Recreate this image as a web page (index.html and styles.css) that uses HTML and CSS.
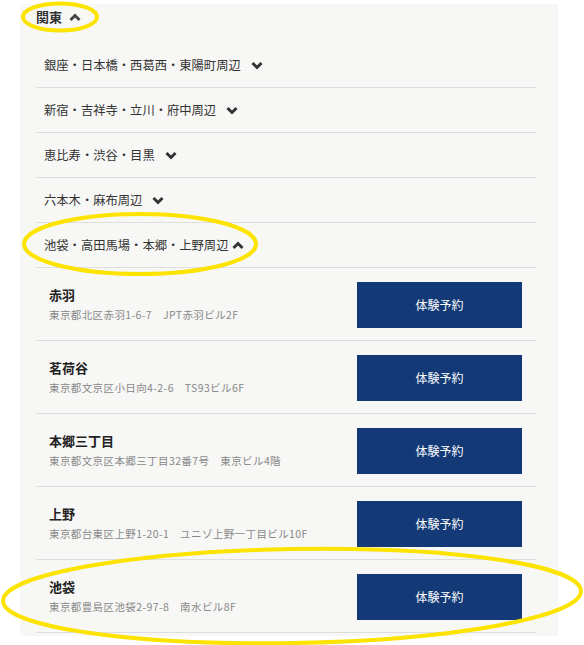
FILE: index.html
```html
<!DOCTYPE html>
<html lang="ja">
<head>
<meta charset="utf-8">
<link rel="stylesheet" href="styles.css">
</head>
<body>
<div class="panel">
  <div class="region">関東
    <svg class="chev" width="12" height="9" viewBox="0 0 12 9"><polyline points="1.5,7 6,2.5 10.5,7"/></svg>
  </div>
  <ul class="areas">
    <li class="area">銀座・日本橋・西葛西・東陽町周辺<svg class="chev" width="12" height="9" viewBox="0 0 12 9"><polyline points="1.5,2 6,6.5 10.5,2"/></svg></li>
    <li class="area">新宿・吉祥寺・立川・府中周辺<svg class="chev" width="12" height="9" viewBox="0 0 12 9"><polyline points="1.5,2 6,6.5 10.5,2"/></svg></li>
    <li class="area">恵比寿・渋谷・目黒<svg class="chev" width="12" height="9" viewBox="0 0 12 9"><polyline points="1.5,2 6,6.5 10.5,2"/></svg></li>
    <li class="area">六本木・麻布周辺<svg class="chev" width="12" height="9" viewBox="0 0 12 9"><polyline points="1.5,2 6,6.5 10.5,2"/></svg></li>
    <li class="area open">池袋・高田馬場・本郷・上野周辺<svg class="chev" width="12" height="9" viewBox="0 0 12 9"><polyline points="1.5,7 6,2.5 10.5,7"/></svg></li>
  </ul>
  <ul class="shops">
    <li class="shop"><div class="info"><div class="name">赤羽</div><div class="addr">東京都北区赤羽1-6-7　JPT赤羽ビル2F</div></div><a class="btn">体験予約</a></li>
    <li class="shop"><div class="info"><div class="name">茗荷谷</div><div class="addr">東京都文京区小日向4-2-6　TS93ビル6F</div></div><a class="btn">体験予約</a></li>
    <li class="shop"><div class="info"><div class="name">本郷三丁目</div><div class="addr">東京都文京区本郷三丁目32番7号　東京ビル4階</div></div><a class="btn">体験予約</a></li>
    <li class="shop"><div class="info"><div class="name">上野</div><div class="addr">東京都台東区上野1-20-1　ユニゾ上野一丁目ビル10F</div></div><a class="btn">体験予約</a></li>
    <li class="shop"><div class="info"><div class="name">池袋</div><div class="addr">東京都豊島区池袋2-97-8　南水ビル8F</div></div><a class="btn">体験予約</a></li>
  </ul>
</div>
<svg class="marks" width="584" height="645" viewBox="0 0 584 645">
  <ellipse cx="60" cy="17" rx="37" ry="13.5"/>
  <ellipse cx="140" cy="244" rx="116" ry="30"/>
  <ellipse cx="292" cy="596" rx="289" ry="47" transform="rotate(-1 292 596)"/>
</svg>
</body>
</html>
```
FILE: styles.css
```css
html, body {
  margin: 0;
  padding: 0;
  background: #fff;
}
body {
  font-family: "Noto Sans CJK JP", "Noto Sans", sans-serif;
  color: #333;
  position: relative;
  width: 584px;
  height: 645px;
  overflow: hidden;
}
ul {
  list-style: none;
  margin: 0;
  padding: 0;
}
.panel {
  margin: 4px 0 0 20px;
  width: 538px;
  box-sizing: border-box;
  padding: 0 22px 3px 16px;
  background: #f7f7f5;
}
.region {
  height: 26px;
  line-height: 26px;
  font-size: 13px;
  font-weight: bold;
  color: #333;
  display: flex;
  align-items: center;
  gap: 7px;
  margin-bottom: 13px;
}
.chev {
  display: block;
}
.chev polyline {
  fill: none;
  stroke: #333;
  stroke-width: 3;
  stroke-linecap: butt;
  stroke-linejoin: miter;
}
.region .chev polyline {
  stroke: #444;
}
.area {
  height: 44px;
  border-bottom: 1px solid #dedede;
  padding-left: 8px;
  display: flex;
  align-items: center;
  gap: 10px;
  font-size: 12.3px;
  color: #333;
}
.area.open {
  gap: 4px;
}
.shop {
  height: 72px;
  border-bottom: 1px solid #dedede;
  display: flex;
  align-items: center;
  justify-content: space-between;
  padding: 0 14px 0 13px;
}
.name {
  font-size: 13px;
  font-weight: bold;
  line-height: 20px;
  color: #222;
}
.addr {
  font-size: 10.5px;
  letter-spacing: 0.4px;
  line-height: 16px;
  margin-top: 2px;
  color: #888;
}
.btn {
  display: flex;
  align-items: center;
  justify-content: center;
  width: 165px;
  height: 46px;
  background: #133a77;
  color: #fff;
  font-size: 12px;
  margin-top: 1px;
}
.marks {
  position: absolute;
  left: 0;
  top: 0;
  pointer-events: none;
}
.marks ellipse {
  fill: none;
  stroke: #fce300;
  stroke-width: 4;
}
```
